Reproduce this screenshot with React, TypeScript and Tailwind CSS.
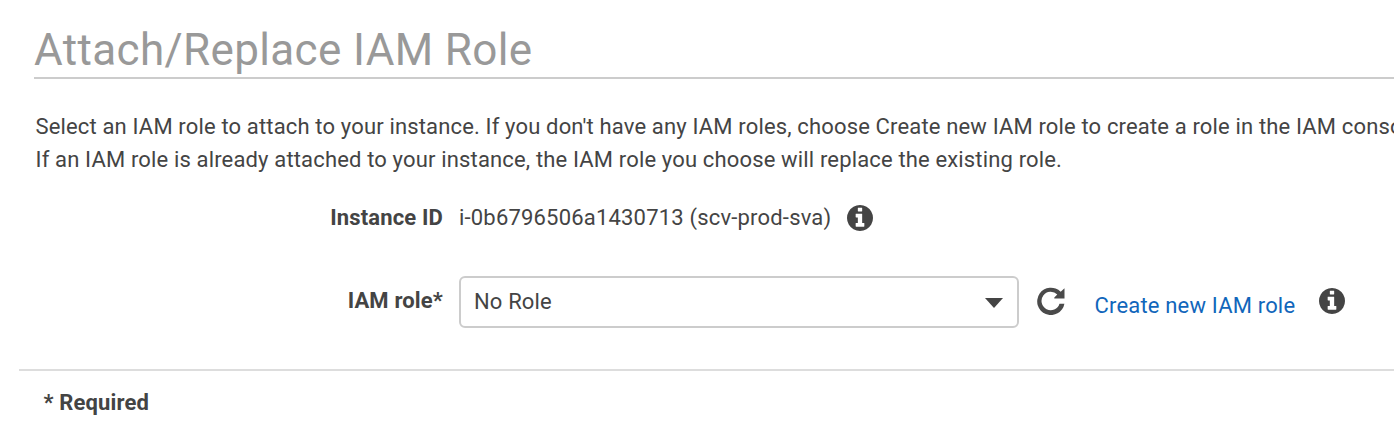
function InfoIcon() {
  return (
    <svg viewBox="0 0 1536 1536" className="size-[26px] shrink-0 fill-[#444]">
      <path d="M1024 1248v-160q0-14-9-23t-23-9h-96V544q0-14-9-23t-23-9H544q-14 0-23 9t-9 23v160q0 14 9 23t23 9h96v320h-96q-14 0-23 9t-9 23v160q0 14 9 23t23 9h448q14 0 23-9t9-23zM896 352V192q0-14-9-23t-23-9H672q-14 0-23 9t-9 23v160q0 14 9 23t23 9h192q14 0 23-9t9-23zM1536 768q0 209-103 385.500T1153.500 1433T768 1536t-385.500-103T103 1153.500T0 768t103-385.500T382.500 103T768 0t385.500 103T1433 382.500T1536 768z" />
    </svg>
  );
}

function RefreshIcon() {
  return (
    <svg viewBox="0 0 28 28" className="mt-[11px] ml-[18px] size-[28px] shrink-0 fill-[#4a4a4a]">
      <path d="M27.500 1.300V11.500H17.300V10.500L20.300 7.500A9.200 9.200 0 1 0 22.500 16.700H27.400A13.700 13.700 0 1 1 23.700 4.800Z" />
    </svg>
  );
}

export default function App() {
  return (
    <main className="h-[434px] w-full overflow-hidden bg-white font-['Roboto',sans-serif] text-[22px] tracking-[0.155px] text-[#444]">
      <header className="ml-[34px] h-[79px] border-b-2 border-[#ccc] pt-[22px]">
        <h1 className="text-[44px] leading-[56px] tracking-[0.36px] whitespace-nowrap text-[#999]">Attach/Replace IAM Role</h1>
      </header>
      <p className="mt-[31px] ml-[35.500px] leading-[33px] whitespace-nowrap">
        Select an IAM role to attach to your instance. If you don't have any IAM roles, choose Create new IAM role to create a role in the IAM console.
        <br />
        If an IAM role is already attached to your instance, the IAM role you choose will replace the existing role.
      </p>
      <div className="mt-[25px] flex h-[34px] whitespace-nowrap">
        <span className="w-[443px] text-right leading-[33px] font-bold">Instance ID</span>
        <span className="ml-4 w-[388px] leading-[33px] tracking-[0.19px]">i-0b6796506a1430713 (scv-prod-sva)</span>
        <div className="pt-1"><InfoIcon /></div>
      </div>
      <div className="mt-[41px] flex h-[52px] whitespace-nowrap">
        <label className="w-[443px] pt-[8px] text-right leading-[33px] font-bold">IAM role*</label>
        <button className="ml-4 flex h-[52px] w-[560px] items-center justify-between rounded-[6px] border-2 border-[#ccc] pr-[14px] pl-[13px]">
          <span className="pb-[2px]">No Role</span>
          <svg viewBox="0 0 18 10" className="mt-[2px] h-[10px] w-[18px] fill-[#444]"><path d="M0 0H18L9 10Z" /></svg>
        </button>
        <RefreshIcon />
        <a className="mt-[13px] ml-[29.500px] w-[224.500px] leading-[33px] tracking-[0.18px] text-[#1166bb]">Create new IAM role</a>
        <div className="mt-[12px]"><InfoIcon /></div>
      </div>
      <footer className="mt-[41px] ml-[19px] border-t-2 border-[#ddd] pt-[15px] pl-[24.500px] leading-[33px] font-bold">* Required</footer>
    </main>
  );
}
